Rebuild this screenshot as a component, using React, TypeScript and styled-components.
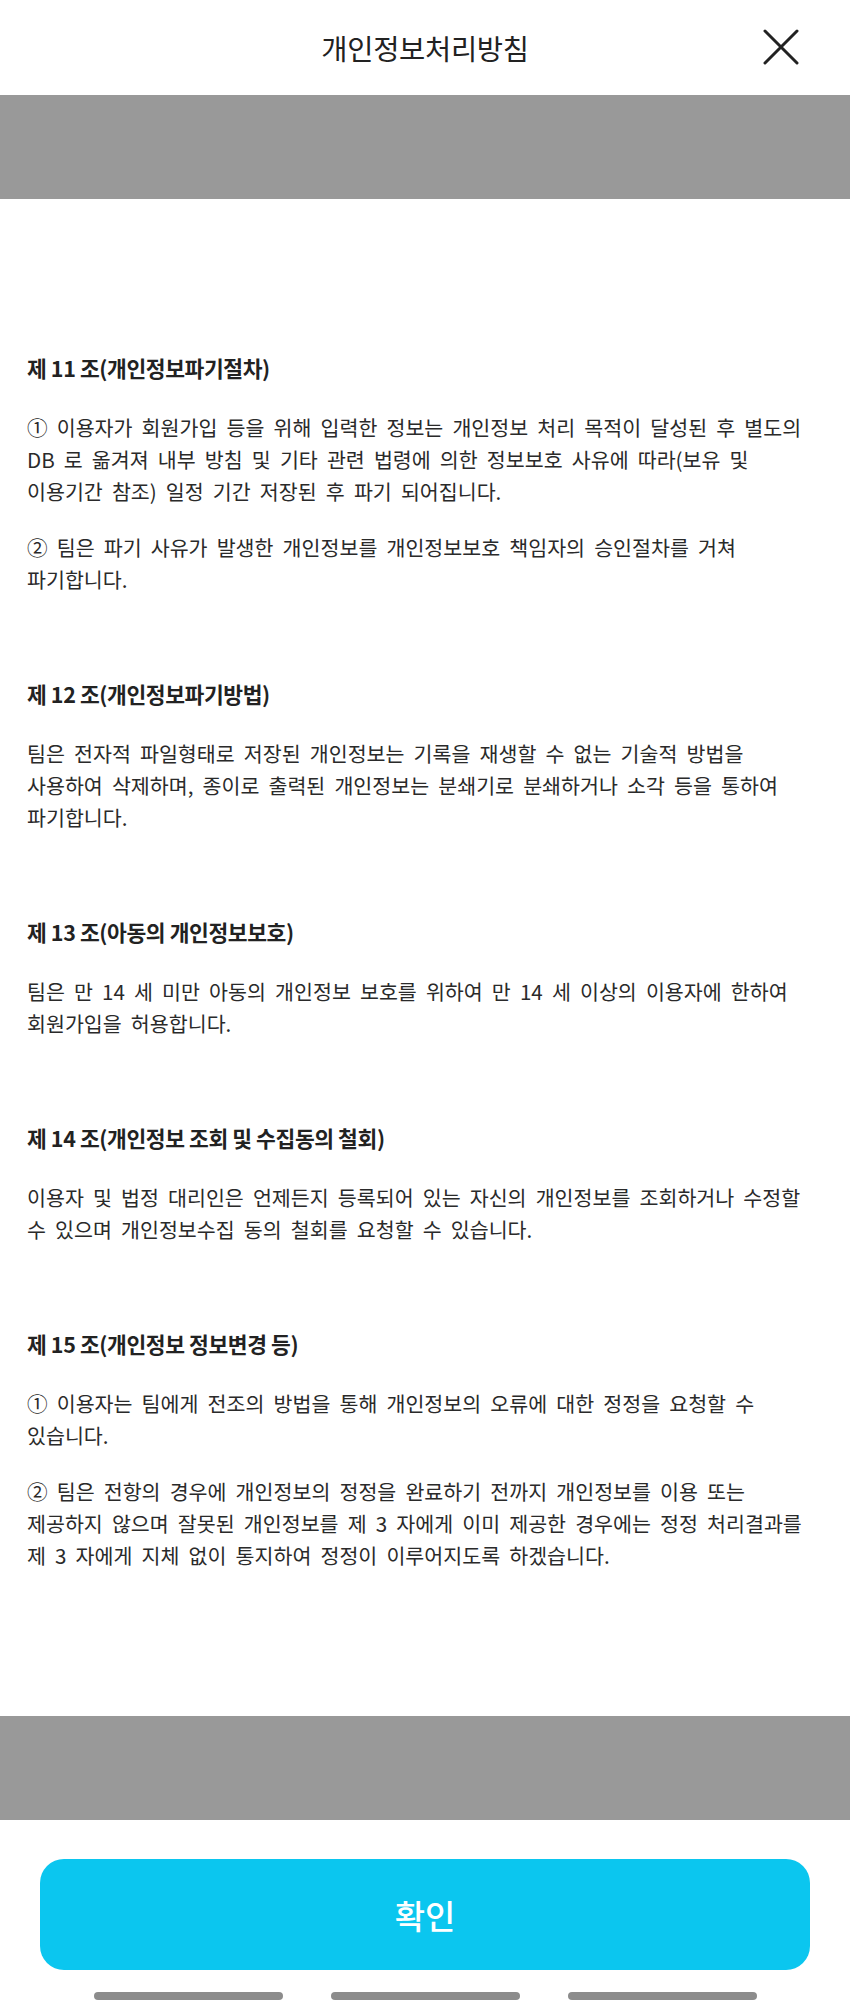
import { Fragment } from 'react';
import styled, { createGlobalStyle } from 'styled-components';

const GlobalStyle = createGlobalStyle`
  * {
    box-sizing: border-box;
  }
  body {
    margin: 0;
    background: #ffffff;
    font-family: 'Noto Sans CJK KR', 'Noto Sans', sans-serif;
    color: #222222;
  }
`;

type Section = {
  title: string;
  paragraphs: string[][];
};

const sections: Section[] = [
  {
    title: '제 11 조(개인정보파기절차)',
    paragraphs: [
      [
        '① 이용자가 회원가입 등을 위해 입력한 정보는 개인정보 처리 목적이 달성된 후 별도의',
        'DB 로 옮겨져 내부 방침 및 기타 관련 법령에 의한 정보보호 사유에 따라(보유 및',
        '이용기간 참조) 일정 기간 저장된 후 파기 되어집니다.',
      ],
      ['② 팀은 파기 사유가 발생한 개인정보를 개인정보보호 책임자의 승인절차를 거쳐', '파기합니다.'],
    ],
  },
  {
    title: '제 12 조(개인정보파기방법)',
    paragraphs: [
      [
        '팀은 전자적 파일형태로 저장된 개인정보는 기록을 재생할 수 없는 기술적 방법을',
        '사용하여 삭제하며, 종이로 출력된 개인정보는 분쇄기로 분쇄하거나 소각 등을 통하여',
        '파기합니다.',
      ],
    ],
  },
  {
    title: '제 13 조(아동의 개인정보보호)',
    paragraphs: [['팀은 만 14 세 미만 아동의 개인정보 보호를 위하여 만 14 세 이상의 이용자에 한하여', '회원가입을 허용합니다.']],
  },
  {
    title: '제 14 조(개인정보 조회 및 수집동의 철회)',
    paragraphs: [
      [
        '이용자 및 법정 대리인은 언제든지 등록되어 있는 자신의 개인정보를 조회하거나 수정할',
        '수 있으며 개인정보수집 동의 철회를 요청할 수 있습니다.',
      ],
    ],
  },
  {
    title: '제 15 조(개인정보 정보변경 등)',
    paragraphs: [
      ['① 이용자는 팀에게 전조의 방법을 통해 개인정보의 오류에 대한 정정을 요청할 수', '있습니다.'],
      [
        '② 팀은 전항의 경우에 개인정보의 정정을 완료하기 전까지 개인정보를 이용 또는',
        '제공하지 않으며 잘못된 개인정보를 제 3 자에게 이미 제공한 경우에는 정정 처리결과를',
        '제 3 자에게 지체 없이 통지하여 정정이 이루어지도록 하겠습니다.',
      ],
    ],
  },
];

const App = () => {
  return (
    <>
      <GlobalStyle />
      <Page>
        <Header>
          <Title>개인정보처리방침</Title>
          <CloseButton aria-label="닫기">
            <svg width="36" height="36" viewBox="0 0 36 36" fill="none">
              <path d="M2 2L34 34M34 2L2 34" stroke="#222222" strokeWidth="3" strokeLinecap="round" />
            </svg>
          </CloseButton>
        </Header>
        <Band />
        <Content>
          {sections.map((section) => (
            <Article key={section.title}>
              <ArticleTitle>{section.title}</ArticleTitle>
              {section.paragraphs.map((lines, index) => (
                <Paragraph key={index}>
                  {lines.map((line, i) => (
                    <Fragment key={i}>
                      {i > 0 && <br />}
                      {line}
                    </Fragment>
                  ))}
                </Paragraph>
              ))}
            </Article>
          ))}
        </Content>
        <Band />
        <Footer>
          <ConfirmButton>확인</ConfirmButton>
          <NavBar>
            <NavPill />
            <NavPill />
            <NavPill />
          </NavBar>
        </Footer>
      </Page>
    </>
  );
};

export default App;

const Page = styled.div`
  width: 850px;
  height: 2010px;
  display: flex;
  flex-direction: column;
  overflow: hidden;
`;

const Header = styled.header`
  position: relative;
  height: 95px;
  display: flex;
  align-items: center;
  justify-content: center;
`;

const Title = styled.h1`
  margin: 0;
  font-size: 28.5px;
  font-weight: 400;
  color: #222222;
  letter-spacing: -0.3px;
`;

const CloseButton = styled.button`
  position: absolute;
  top: 29px;
  right: 51px;
  width: 36px;
  height: 36px;
  padding: 0;
  border: none;
  background: none;
  display: flex;
  cursor: pointer;
`;

const Band = styled.div`
  height: 104px;
  flex-shrink: 0;
  background-color: #999999;
`;

const Content = styled.main`
  flex: 1;
  padding: 153px 27px 0;
  display: flex;
  flex-direction: column;
  gap: 83px;
`;

const Article = styled.section`
  display: flex;
  flex-direction: column;
  gap: 24px;
`;

const ArticleTitle = styled.h2`
  margin: 0 0 3px;
  font-size: 21.5px;
  line-height: 32px;
  font-weight: 700;
  color: #222222;
  letter-spacing: -0.4px;
`;

const Paragraph = styled.p`
  margin: 0;
  font-size: 20.6px;
  line-height: 32px;
  font-weight: 400;
  color: #2a2a2a;
  word-spacing: 4.5px;
  white-space: nowrap;
`;

const Footer = styled.footer`
  height: 190px;
  display: flex;
  flex-direction: column;
  align-items: center;
  padding-top: 39px;
`;

const ConfirmButton = styled.button`
  width: 770px;
  height: 111px;
  border: none;
  border-radius: 24px;
  background-color: #0bc6ef;
  color: #ffffff;
  font-family: 'Noto Sans CJK KR', 'Noto Sans', sans-serif;
  font-size: 33px;
  font-weight: 500;
  cursor: pointer;
`;

const NavBar = styled.div`
  margin-top: 22px;
  display: flex;
  gap: 48px;
`;

const NavPill = styled.span`
  width: 189px;
  height: 8px;
  border-radius: 4px;
  background-color: #8c8c8c;
`;
